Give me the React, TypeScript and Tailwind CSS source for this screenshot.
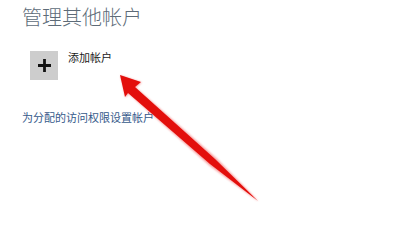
export default function App() {
  const font = { fontFamily: '"Noto Sans CJK SC", "Noto Sans", sans-serif' }
  return (
    <div className="relative h-[202px] w-full overflow-hidden bg-white" style={font}>
      <div className="flex flex-col pl-[22px] pt-[7px]">
        <h1 className="text-[20px] font-light leading-[20px] text-[#5d6b78]">管理其他帐户</h1>

        <div className="ml-[8px] mt-[24px] flex items-start gap-[10px]">
          <div className="flex h-[29px] w-[28px] items-center justify-center bg-[#cdcdcd]">
            <svg width="15" height="15" viewBox="0 0 15 15">
              <path d="M7.5 1v13M1 7.5h13" stroke="#111" strokeWidth="2.8" />
            </svg>
          </div>
          <span className="mt-[1px] text-[11px] leading-[11px] text-[#1a1a1a]">添加帐户</span>
        </div>

        <a className="mt-[32px] text-[11px] leading-[11px] text-[#35598a]">为分配的访问权限设置帐户</a>
      </div>

      {/* red annotation arrow */}
      <svg className="absolute left-0 top-0" width="397" height="202" viewBox="0 0 397 202">
        <defs>
          <filter id="glow" x="-20%" y="-20%" width="140%" height="140%">
            <feGaussianBlur stdDeviation="0.9" />
          </filter>
        </defs>
        <polygon
          points="120,75 141,82 135,87 216,158 258,201 209,165 128,93 125,97"
          fill="#f04040"
          opacity="0.55"
          filter="url(#glow)"
          transform="translate(0.6,0.6)"
        />
        <polygon points="120,75 141,82 135,87 215,159 258,201 210,164 128,93 125,97" fill="#e30f0c" />
      </svg>
    </div>
  )
}
